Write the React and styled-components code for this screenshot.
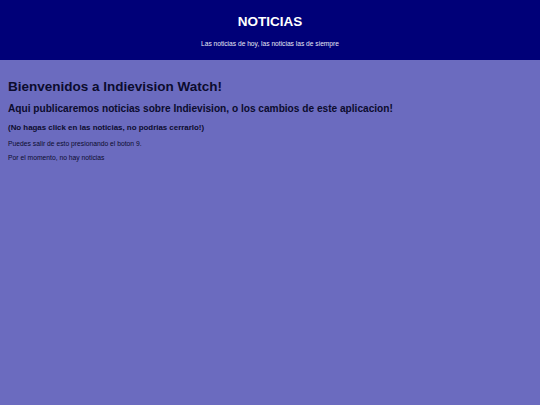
import React from "react";
import styled, { createGlobalStyle } from "styled-components";

const GlobalStyle = createGlobalStyle`
  html, body {
    margin: 0;
    padding: 0;
    background-color: #6b6bbf;
    font-family: "Liberation Sans", Arial, sans-serif;
  }
  #root {
    min-height: 100vh;
  }
`;

const App = () => {
  return (
    <Page>
      <GlobalStyle />
      <Header>
        <Title>NOTICIAS</Title>
        <Subtitle>Las noticias de hoy, las noticias las de siempre</Subtitle>
      </Header>
      <Content>
        <Welcome>Bienvenidos a Indievision Watch!</Welcome>
        <Lead>Aqui publicaremos noticias sobre Indievision, o los cambios de este aplicacion!</Lead>
        <Warning>(No hagas click en las noticias, no podrias cerrarlo!)</Warning>
        <Note gap={8}>Puedes salir de esto presionando el boton 9.</Note>
        <Note gap={6}>Por el momento, no hay noticias</Note>
      </Content>
    </Page>
  );
};

export default App;

const Page = styled.div`
  width: 100%;
  min-height: 100vh;
  background-color: #6b6bbf;
  color: #0c0c2e;
`;

const Header = styled.header`
  height: 60px;
  box-sizing: border-box;
  padding-top: 14px;
  background-color: #000078;
  display: flex;
  flex-direction: column;
  align-items: center;
`;

const Title = styled.h1`
  margin: 0;
  font-size: 13.5px;
  line-height: 16px;
  font-weight: 700;
  color: #ffffff;
`;

const Subtitle = styled.p`
  margin: 10px 0 0;
  font-size: 6.65px;
  line-height: 8px;
  color: #e8e8f6;
`;

const Content = styled.main`
  padding: 19px 8px 0;
  display: flex;
  flex-direction: column;
`;

const Welcome = styled.h2`
  margin: 0;
  font-size: 13.5px;
  line-height: 16px;
  font-weight: 700;
`;

const Lead = styled.h3`
  margin: 8px 0 0;
  font-size: 10.15px;
  line-height: 12px;
  font-weight: 700;
`;

const Warning = styled.h4`
  margin: 8px 0 0;
  font-size: 7.9px;
  line-height: 9px;
  font-weight: 700;
`;

const Note = styled.p`
  margin: ${(p) => p.gap}px 0 0;
  font-size: 6.75px;
  line-height: 8px;
`;
